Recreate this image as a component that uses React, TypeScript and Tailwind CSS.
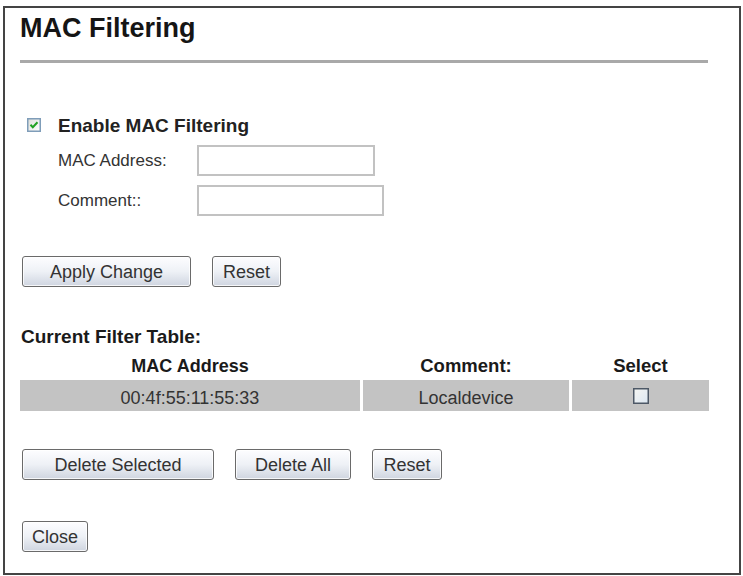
import React from "react"

function Btn({ label, w }: { label: string; w: string }) {
  return (
    <button
      className={`${w} h-[31px] rounded-[3px] border-[1.5px] border-[#6a6a6a] bg-linear-to-b from-[#fdfdff] via-[#eef1f6] to-[#cfd5e0] text-[18px] leading-none text-[#333] shadow-[inset_0_0_0_1px_rgba(255,255,255,0.8)]`}
    >
      {label}
    </button>
  )
}

function CheckedBox() {
  return (
    <svg width="14" height="14" viewBox="0 0 14 14" className="shrink-0">
      <defs>
        <linearGradient id="cbfill" x1="0" y1="0" x2="1" y2="1">
          <stop offset="0" stopColor="#dcdcd6" />
          <stop offset="1" stopColor="#ffffff" />
        </linearGradient>
      </defs>
      <rect x="0.75" y="0.75" width="12.5" height="12.5" fill="url(#cbfill)" stroke="#7f9db9" strokeWidth="1.5" />
      <path d="M3.5 6.8 L5.8 9.2 L10.5 4.3" fill="none" stroke="#21a121" strokeWidth="2" />
    </svg>
  )
}

function EmptyBox() {
  return (
    <svg width="16" height="16" viewBox="0 0 16 16">
      <defs>
        <linearGradient id="ebfill" x1="0" y1="0" x2="1" y2="1">
          <stop offset="0" stopColor="#f6f6f2" />
          <stop offset="1" stopColor="#dce7f2" />
        </linearGradient>
      </defs>
      <rect x="0.75" y="0.75" width="14.5" height="14.5" fill="url(#ebfill)" stroke="#4d5866" strokeWidth="1.5" />
    </svg>
  )
}

export default function App() {
  return (
    <div className="min-h-screen bg-white pl-[3px] pt-[6px] font-['Liberation_Sans',Arial,sans-serif]">
      <div className="h-[569px] w-[738px] border-2 border-[#444] pl-[15px]">
        {/* Heading */}
        <h1 className="mt-[4px] text-[27px] font-bold leading-[32px] text-[#151515]">MAC Filtering</h1>
        <div className="mt-[16px] h-[3px] w-[688px] bg-[#a9a9a9]" />

        {/* Enable + inputs */}
        <div className="mt-[51px] flex h-[24px] items-center">
          <div className="ml-[7px] mb-[3px]">
            <CheckedBox />
          </div>
          <span className="ml-[17px] text-[19px] font-bold leading-[24px] text-[#222]">Enable MAC Filtering</span>
        </div>

        <div className="mt-[7px] flex h-[31px] items-center">
          <span className="ml-[38px] w-[139px] text-[17px] text-[#333]">MAC Address:</span>
          <input className="h-[31px] w-[178px] border-2 border-[#c2c2c2] bg-white" />
        </div>
        <div className="mt-[9px] flex h-[31px] items-center">
          <span className="ml-[38px] w-[139px] text-[17px] text-[#333]">Comment::</span>
          <input className="h-[31px] w-[187px] border-2 border-[#c2c2c2] bg-white" />
        </div>

        <div className="ml-[2px] mt-[40px] flex gap-[21px]">
          <Btn label="Apply Change" w="w-[169px]" />
          <Btn label="Reset" w="w-[69px]" />
        </div>

        {/* Filter table */}
        <div className="ml-[1px] mt-[39px] text-[19px] font-bold leading-[22px] text-[#1a1a1a]">Current Filter Table:</div>

        <div className="mt-[7px] grid w-[689px] grid-cols-[340px_206px_137px] gap-x-[3px] gap-y-[3px] text-[18px]">
          <div className="h-[22px] text-center font-bold leading-[22px] text-[#1a1a1a]">MAC Address</div>
          <div className="h-[22px] text-center text-[18.5px] font-bold leading-[22px] text-[#1a1a1a]">Comment:</div>
          <div className="h-[22px] text-center text-[18.5px] font-bold leading-[22px] text-[#1a1a1a]">Select</div>

          <div className="h-[31px] bg-[#c3c3c3] pt-[7px] text-center leading-[22px] text-[#333]">00:4f:55:11:55:33</div>
          <div className="h-[31px] bg-[#c3c3c3] pt-[7px] text-center leading-[22px] text-[#333]">Localdevice</div>
          <div className="flex h-[31px] justify-center bg-[#c3c3c3] pt-[8px]">
            <EmptyBox />
          </div>
        </div>

        <div className="ml-[2px] mt-[38px] flex gap-[21px]">
          <Btn label="Delete Selected" w="w-[192px]" />
          <Btn label="Delete All" w="w-[116px]" />
          <Btn label="Reset" w="w-[70px]" />
        </div>

        <div className="ml-[2px] mt-[41px]">
          <Btn label="Close" w="w-[66px]" />
        </div>
      </div>
    </div>
  )
}
